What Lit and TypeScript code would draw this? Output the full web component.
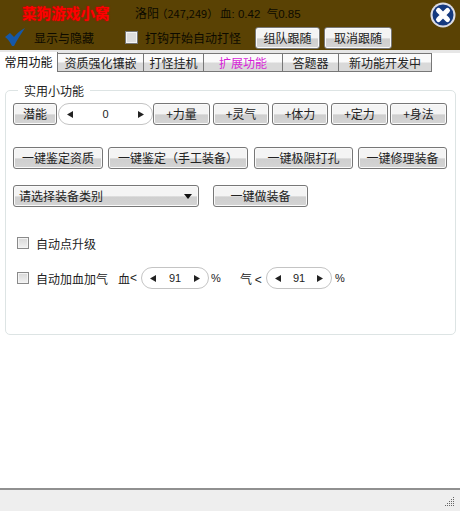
import { LitElement, html, css } from "lit";
import { customElement } from "lit/decorators.js";

const tri = (dir: "l" | "r") => html`<svg class="tri" width="6" height="7" viewBox="0 0 6 7"><path d=${dir === "l" ? "M6 0V7L0 3.5Z" : "M0 0V7L6 3.5Z"} fill="#222"></path></svg>`;

@customElement("app-root")
export class AppRoot extends LitElement {
  static styles = css`
    :host { display: flex; flex-direction: column; width: 460px; height: 511px; background: #fff; overflow: hidden;
      font-family: "Noto Sans CJK SC", "Liberation Sans", sans-serif; font-size: 12px; color: #222; }
    * { box-sizing: border-box; }
    .header { height: 50px; background: #5a4204; display: flex; flex-shrink: 0; }
    .hmain { flex: 1; display: flex; flex-direction: column; }
    .r1 { height: 25px; display: flex; align-items: center; padding-left: 22px; color: #0c0a00; }
    .title { width: 113px; font-size: 14.6px; font-weight: 700; color: #f00; text-shadow: 0 0 2px #c00; line-height: 20px; }
    .city { width: 25px; }
    .coord { width: 60px; padding-left: 2px; font-size: 11px; color: #0c0a00; font-feature-settings: "halt"; white-space: nowrap; }
    .stat { font-size: 11.5px; white-space: pre; color: #0c0a00; font-family: "Liberation Sans", "Noto Sans CJK SC", sans-serif; }
    .r2 { height: 25px; display: flex; align-items: center; padding-left: 5px; color: #0c0a00; }
    .check { width: 20px; height: 18px; margin-right: 9px; margin-top: -2px; }
    .show { width: 91px; }
    .cb { width: 12px; height: 12px; border: 1px solid #8a8a8a; background: linear-gradient(#d8d8d8, #f2f2f2); box-shadow: inset 0 0 0 1px #f4f4f4; flex-shrink: 0; }
    .r2 .cb { width: 13px; height: 13px; margin-right: 7px; border-color: #777; background: #ddd; }
    .hook { width: 110px; white-space: nowrap; }
    .r2 .btn { height: 22px; margin-top: 1px; }
    .b-team { width: 65px; margin-right: 4px; }
    .b-cancel { width: 68px; }
    .close { width: 26px; height: 26px; margin: 2px 4px 0 0; }
    .sep { height: 3px; background: #e6e6e6; flex-shrink: 0; }
    .tabs { height: 18px; display: flex; flex-shrink: 0; }
    .tab { height: 19px; border: 1px solid #777; border-left: 0; background: linear-gradient(#fafafa 0 45%, #d9d9d9 55%); display: flex; align-items: center; justify-content: center; white-space: nowrap; line-height: 16px; }
    .tab.active { border: 0; background: #fff; height: 20px; width: 58px; margin-top: -1px; border-right: 1px solid #777; color: #111; }
    .t1 { width: 86px; } .t2 { width: 60px; } .t3 { width: 79px; color: #d81fd8; } .t4 { width: 56px; } .t5 { width: 93px; }
    .body { flex: 1; padding: 19px 4px 0 5px; }
    .group { position: relative; height: 245px; border: 1px solid #dde4e4; border-radius: 5px; padding: 12px 8px 0 7px; }
    .legend { position: absolute; left: 12px; top: -9px; background: #fff; padding: 0 6px; line-height: 17px; }
    .row { display: flex; align-items: center; }
    .btn { height: 22px; border: 1px solid #777; border-radius: 3px; background: linear-gradient(#f4f4f4 0 48%, #cfcfcf 55%, #d4d4d4); display: flex; align-items: center; justify-content: center; white-space: nowrap; color: #222; box-shadow: inset 0 0 0 1px #fafafa; line-height: 16px; flex-shrink: 0; }
    .spin { height: 22px; border: 1px solid #c4c4c4; border-radius: 11px; display: flex; align-items: center; justify-content: space-between; padding: 0 8px; font-family: "Liberation Sans", sans-serif; font-size: 11px; flex-shrink: 0; }
    .s-main { width: 95px; margin: 0 0 0 1px; }
    .s-b { width: 68px; margin: 0 2px 0 4px; }
    .s-q { width: 66px; margin: 0 3px 0 2px; }
    .b-qn { width: 44px; }
    .b-attr { width: 57px; margin-right: 2px; }
    .b-a2 { margin-right: 3px; width: 56px; }
    .b-a1 { margin-right: 3px; width: 57px; }
    .row2 { margin-top: 22px; }
    .b1 { width: 90px; margin-right: 5px; } .b2 { width: 140px; margin-right: 6px; } .b3 { width: 99px; margin-right: 5px; } .b4 { width: 89px; }
    .row3 { margin-top: 16px; }
    .select { width: 186px; justify-content: space-between; padding: 0 6px 0 5px; margin-right: 14px; }
    .arrow { width: 8px; height: 5px; }
    .b5 { width: 95px; }
    .row4 { margin-top: 26px; height: 20px; padding-left: 4px; }
    .row5 { margin-top: 14px; height: 22px; padding-left: 4px; }
    .label4 { margin-left: 7px; }
    .l5 { margin-left: 7px; width: 82px; white-space: nowrap; }
    .pct { font-family: "Liberation Sans", sans-serif; font-size: 11px; }
    .pct2 { width: 29px; }
    .qi { width: 24px; white-space: nowrap; }
    .lt { font-family: "Liberation Sans", sans-serif; }
    .status { height: 23px; flex-shrink: 0; border-top: 2px solid #909090; background: #eee; display: flex; justify-content: flex-end; align-items: flex-end; padding: 0 5px 4px 0; }
  `;

  render() {
    return html`
      <div class="header">
        <div class="hmain">
          <div class="r1">
            <span class="title">菜狗游戏小窝</span>
            <span class="city">洛阳</span>
            <span class="coord">（247,249）</span>
            <span class="stat">血: 0.42  气0.85</span>
          </div>
          <div class="r2">
            <svg class="check" viewBox="0 0 20 18"><path d="M0 9L5 5L9 9C12 5 16 2 20 0C16 6 12 12 9 18H7C5 14 3 11 0 9Z" fill="#1658a8"></path></svg>
            <span class="show">显示与隐藏</span>
            <span class="cb"></span>
            <span class="hook">打钩开始自动打怪</span>
            <div class="btn b-team">组队跟随</div>
            <div class="btn b-cancel">取消跟随</div>
          </div>
        </div>
        <svg class="close" viewBox="0 0 26 26">
          <circle cx="13" cy="13" r="12.500" fill="#dcdce4"></circle>
          <circle cx="13" cy="13" r="10.500" fill="#15397f"></circle>
          <path d="M8.500 8.500L17.500 17.500M17.500 8.500L8.500 17.500" stroke="#fff" stroke-width="5" stroke-linecap="round"></path>
        </svg>
      </div>
      <div class="sep"></div>
      <div class="tabs">
        <div class="tab active">常用功能</div>
        <div class="tab t1">资质强化镶嵌</div>
        <div class="tab t2">打怪挂机</div>
        <div class="tab t3">扩展功能</div>
        <div class="tab t4">答题器</div>
        <div class="tab t5">新功能开发中</div>
      </div>
      <div class="body">
        <div class="group">
          <div class="legend">实用小功能</div>
          <div class="row">
            <div class="btn b-qn">潜能</div>
            <div class="spin s-main">${tri("l")}<span>0</span>${tri("r")}</div>
            <div class="btn b-a1">+力量</div>
            <div class="btn b-a2">+灵气</div>
            <div class="btn b-a2">+体力</div>
            <div class="btn b-attr">+定力</div>
            <div class="btn b-attr">+身法</div>
          </div>
          <div class="row row2">
            <div class="btn b1">一键鉴定资质</div>
            <div class="btn b2">一键鉴定（手工装备）</div>
            <div class="btn b3">一键极限打孔</div>
            <div class="btn b4">一键修理装备</div>
          </div>
          <div class="row row3">
            <div class="btn select">
              <span>请选择装备类别</span>
              <svg class="arrow" viewBox="0 0 8 5"><path d="M0 0H8L4 5Z" fill="#111"></path></svg>
            </div>
            <div class="btn b5">一键做装备</div>
          </div>
          <div class="row row4">
            <span class="cb"></span><span class="label4">自动点升级</span>
          </div>
          <div class="row row5">
            <span class="cb"></span><span class="l5">自动加血加气</span>
            <span>血</span><span class="lt">&lt;</span>
            <div class="spin s-b">${tri("l")}<span>91</span>${tri("r")}</div>
            <span class="pct pct2">%</span>
            <span class="qi">气 <span class="lt">&lt;</span></span>
            <div class="spin s-q">${tri("l")}<span>91</span>${tri("r")}</div>
            <span class="pct">%</span>
          </div>
        </div>
      </div>
      <div class="status">
        <svg width="10" height="10" viewBox="0 0 10 10" fill="#666">
          <rect x="8" y="0" width="1" height="1"></rect><rect x="8" y="2" width="1" height="1"></rect><rect x="6" y="2" width="1" height="1"></rect>
          <rect x="8" y="4" width="1" height="1"></rect><rect x="6" y="4" width="1" height="1"></rect><rect x="4" y="4" width="1" height="1"></rect>
          <rect x="8" y="6" width="1" height="1"></rect><rect x="6" y="6" width="1" height="1"></rect><rect x="4" y="6" width="1" height="1"></rect><rect x="2" y="6" width="1" height="1"></rect>
          <rect x="8" y="8" width="1" height="1"></rect><rect x="6" y="8" width="1" height="1"></rect><rect x="4" y="8" width="1" height="1"></rect><rect x="2" y="8" width="1" height="1"></rect><rect x="0" y="8" width="1" height="1"></rect>
        </svg>
      </div>
    `;
  }
}
